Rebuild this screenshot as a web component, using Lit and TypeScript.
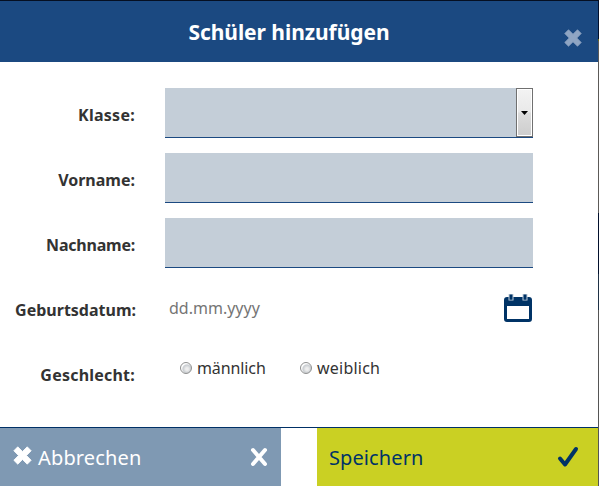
import { LitElement, html, css } from "lit";
import { customElement } from "lit/decorators.js";

@customElement("app-root")
export class AppRoot extends LitElement {
  static styles = css`
    :host { display: block; width: 599px; height: 486px; font-family: "Noto Sans", sans-serif; color: #333; }
    * { box-sizing: border-box; }
    .dialog { display: flex; flex-direction: column; height: 486px; background: #fff; border-top: 1px solid #050f22; position: relative; overflow: hidden; }
    .edge { position: absolute; right: 0; top: 0; bottom: 0; width: 1px;
      background: linear-gradient(#02102c 0 38px, #6b6a10 38px 40px, #5c5a58 40px 212px, #02102c 212px 273px, #1f3145 273px 309px, #555 309px); }
    header { height: 61px; background: #1b4981; display: grid; grid-template-columns: 60px 1fr 60px; align-items: center; color: #fff; }
    h1 { grid-column: 2; margin: 0; font-size: 21px; line-height: 30px; font-weight: 700; text-align: center; white-space: nowrap; letter-spacing: -0.06px; padding-right: 21px; }
    .close { grid-column: 3; width: 18px; height: 18px; margin: 12px 0 0 25px; fill: #8fa5c3; display: block; }
    form { height: 365px; padding-top: 26px; display: grid; grid-template-columns: 135px 368px; column-gap: 30px; grid-template-rows: 50px 50px 50px 50px 50px; row-gap: 15px; }
    .label { font-weight: 700; font-size: 16px; line-height: 24px; text-align: right; padding-top: 15px; white-space: nowrap; }
    .l-class { letter-spacing: 0.27px; }
    .l-last { letter-spacing: -0.22px; }
    .l-date { margin-right: -1px; }
    .l-sex { letter-spacing: 0.22px; }
    .field { background: #c4ced8; border-bottom: 1px solid #1b4981; display: flex; justify-content: flex-end; }
    .drop { width: 17px; height: 49px; border: 1px solid #707070; box-shadow: inset 0 0 0 1px #fff; background: linear-gradient(#f3f3f3, #e9e9e9 48%, #dcdcdc 52%, #cdcdcd); display: grid; place-items: center; }
    .drop svg { width: 7px; height: 4px; display: block; }
    .date { display: flex; justify-content: space-between; align-items: center; padding: 0 1px 0 4px; font-size: 16px; color: #757575; }
    .date svg { width: 28px; height: 28px; }
    .radios { display: flex; padding: 5px 0 0 15px; height: 34px; font-size: 16px; align-items: center; }
    .option { display: flex; align-items: center; width: 120px; gap: 5px; }
    .male { letter-spacing: -0.1px; }
    .female { letter-spacing: 0.22px; }
    .dot { width: 12px; height: 12px; border-radius: 50%; border: 1px solid #8e8f8f; background: radial-gradient(circle at 60% 60%, #eee 0 15%, #c8ccd0 48%, #fff 62%); }
    footer { height: 59px; border-top: 1px solid #003066; display: grid; grid-template-columns: 281px 282px; column-gap: 36px; font-size: 20px; }
    .btn { display: flex; align-items: center; padding: 0 13px 0 13px; }
    .cancel { background: #7f99b3; color: #fff; letter-spacing: 0.15px; }
    .save { background: #cad023; color: #003366; padding: 0 20px 0 12px; letter-spacing: 0.1px; }
    .btn span { flex: 1; }
    .cross { width: 19px; height: 19px; fill: #fff; margin: -4px 6px 0 0; }
    .thin { width: 18px; height: 20px; margin-top: -1px; } .check { width: 22px; height: 22px; }
  `;

  private cross(cls: string) {
    return html`<svg class=${cls} viewBox="0 0 18 18"><path stroke-width=".8" stroke-linejoin="round" d="M4.5 .8 9 5.2 13.5 .8 17.2 4.5 12.8 9 17.2 13.5 13.5 17.2 9 12.8 4.5 17.2 .8 13.5 5.2 9 .8 4.5Z" stroke=${cls === "close" ? "#8fa5c3" : "#fff"}/></svg>`;
  }

  render() {
    return html`<div class="dialog">
      <header><h1><span>Schüler hinzufügen</span></h1>${this.cross("close")}</header>
      <form>
        <div class="label l-class"><span>Klasse:</span></div>
        <div class="field"><div class="drop"><svg viewBox="0 0 7 4"><path d="M0 0H7L3.5 4Z"/></svg></div></div>
        <div class="label"><span>Vorname:</span></div><div class="field"></div>
        <div class="label l-last"><span>Nachname:</span></div><div class="field"></div>
        <div class="label l-date"><span>Geburtsdatum:</span></div>
        <div class="date"><span>dd.mm.yyyy</span>
          <svg viewBox="0 0 28 28" fill="none"><path fill="#036" fill-rule="evenodd" d="M3 3H25Q28 3 28 6V25Q28 28 25 28H3Q0 28 0 25V6Q0 3 3 3ZM3 12V25H25V12Z"/><path d="M7 0V6.5M21 0V6.5" stroke="#c3d0dc" stroke-width="5"/><path d="M7 .5V5.7M21 .5V5.7" stroke="#036" stroke-width="3"/></svg></div>
        <div class="label l-sex"><span>Geschlecht:</span></div>
        <div class="radios"><div class="option male"><i class="dot"></i><span>männlich</span></div><div class="option female"><i class="dot"></i><span>weiblich</span></div></div>
      </form>
      <footer>
        <div class="btn cancel">${this.cross("cross")}<span>Abbrechen</span>
          <svg class="thin" viewBox="0 0 18 20"><path d="M3 3 15 17M15 3 3 17" stroke="#fff" stroke-width="4" stroke-linecap="round"/></svg></div>
        <div class="btn save"><span>Speichern</span>
          <svg class="check" viewBox="0 0 22 22" fill="none"><path d="M3 12.5 8 18.5 19 3" stroke="#036" stroke-width="4" stroke-linecap="round" stroke-linejoin="round"/></svg></div>
      </footer>
      <div class="edge"></div>
    </div>`;
  }
}
